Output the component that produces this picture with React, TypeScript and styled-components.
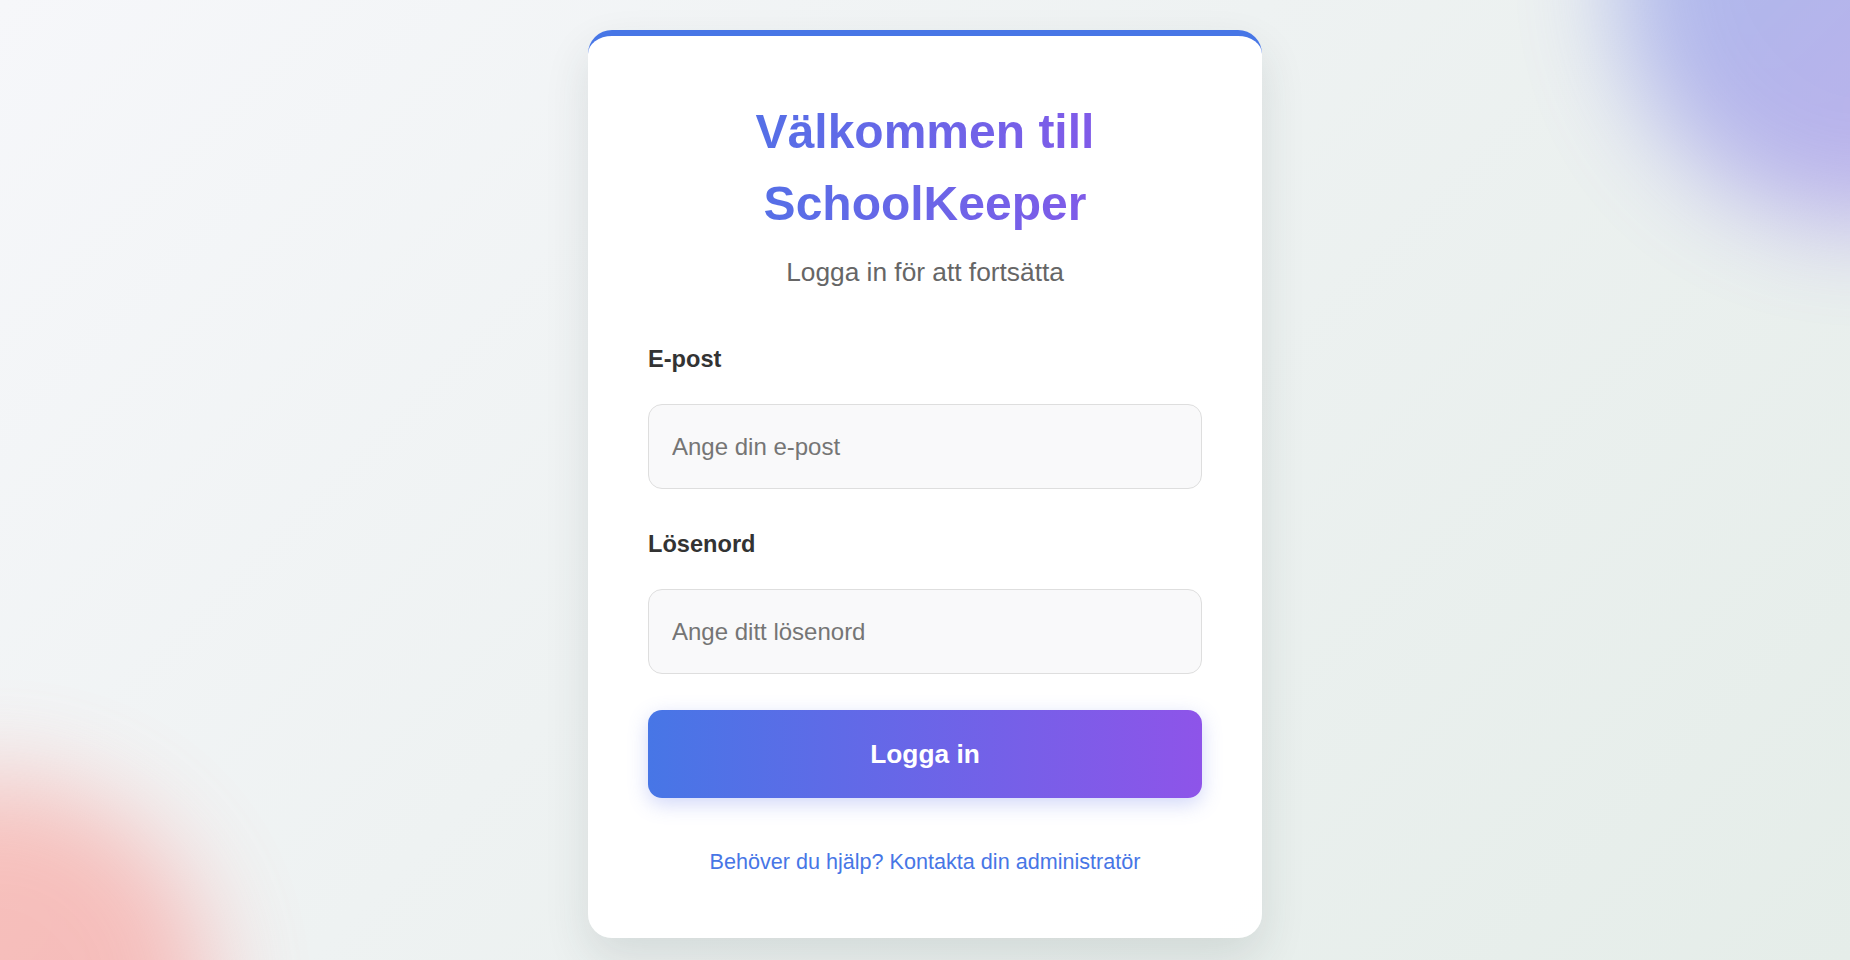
import React from "react";
import styled, { createGlobalStyle } from "styled-components";

const GlobalStyle = createGlobalStyle`
  html, body {
    margin: 0;
    padding: 0;
  }
  body {
    font-family: "Liberation Sans", Arial, sans-serif;
    background: #eef2f1;
  }
  * {
    box-sizing: border-box;
  }
`;

const Page = styled.main`
  position: relative;
  min-height: 100vh;
  height: 960px;
  overflow: hidden;
  display: flex;
  justify-content: center;
  align-items: flex-start;
  padding-top: 30px;
  background: linear-gradient(135deg, #f6f7fa 0%, #eef2f2 45%, #e5ede9 100%);
`;

const Blob = styled.div<{ $variant: "violet" | "coral" }>`
  position: absolute;
  border-radius: 50%;
  pointer-events: none;
  filter: blur(50px);
  ${({ $variant }) =>
    $variant === "violet"
      ? `
    width: 495px;
    height: 495px;
    top: -270px;
    right: -262px;
    background: linear-gradient(135deg, #4776e6 0%, #8e54e9 100%);
    opacity: 0.42;
  `
      : `
    width: 430px;
    height: 430px;
    bottom: -250px;
    left: -220px;
    background: linear-gradient(135deg, #ff8070 0%, #ff6b6b 100%);
    opacity: 0.42;
  `}
`;

const Card = styled.section`
  position: relative;
  z-index: 1;
  width: 674px;
  padding: 60px 60px 64px;
  background: rgba(255, 255, 255, 0.96);
  border-top: 6px solid #4776e6;
  border-radius: 24px;
  box-shadow: 0 20px 45px rgba(40, 60, 60, 0.12);
`;

const Title = styled.h1`
  margin: 0;
  font-size: 48px;
  line-height: 72px;
  font-weight: 700;
  text-align: center;
  background: linear-gradient(90deg, #4776e6 0%, #8e54e9 100%);
  -webkit-background-clip: text;
  background-clip: text;
  color: transparent;
`;

const Subtitle = styled.p`
  margin: 17px 0 59px;
  font-size: 26.3px;
  line-height: 30px;
  color: #666666;
  text-align: center;
`;

const Form = styled.form`
  display: flex;
  flex-direction: column;
`;

const Field = styled.div`
  display: flex;
  flex-direction: column;
  & + & {
    margin-top: 42px;
  }
`;

const Label = styled.label`
  font-size: 23.6px;
  line-height: 27px;
  font-weight: 700;
  color: #333333;
  margin-bottom: 31px;
`;

const Input = styled.input`
  height: 85px;
  width: 100%;
  padding: 0 23px;
  font-family: "Liberation Sans", Arial, sans-serif;
  font-size: 24px;
  color: #333333;
  background: #f9f9fa;
  border: 1px solid #dedede;
  border-radius: 14px;
  outline: none;
  &::placeholder {
    color: #757575;
  }
`;

const SubmitButton = styled.button`
  margin-top: 36px;
  height: 88px;
  width: 100%;
  border: none;
  border-radius: 14px;
  background: linear-gradient(90deg, #4776e6 0%, #8e54e9 100%);
  color: #ffffff;
  font-family: "Liberation Sans", Arial, sans-serif;
  font-size: 26.3px;
  font-weight: 700;
  cursor: pointer;
  box-shadow: 0 6px 20px rgba(90, 110, 235, 0.28);
`;

const HelpLink = styled.a`
  display: block;
  margin-top: 52px;
  font-size: 21.6px;
  line-height: 24px;
  color: #4776e6;
  text-align: center;
  text-decoration: none;
`;

export default function App() {
  return (
    <>
      <GlobalStyle />
      <Page>
        <Blob $variant="violet" />
        <Blob $variant="coral" />
        <Card>
          <Title>Välkommen till SchoolKeeper</Title>
          <Subtitle>Logga in för att fortsätta</Subtitle>
          <Form onSubmit={(e) => e.preventDefault()}>
            <Field>
              <Label htmlFor="email">E-post</Label>
              <Input id="email" type="email" placeholder="Ange din e-post" />
            </Field>
            <Field>
              <Label htmlFor="password">Lösenord</Label>
              <Input id="password" type="password" placeholder="Ange ditt lösenord" />
            </Field>
            <SubmitButton type="submit">Logga in</SubmitButton>
          </Form>
          <HelpLink href="#">Behöver du hjälp? Kontakta din administratör</HelpLink>
        </Card>
      </Page>
    </>
  );
}
